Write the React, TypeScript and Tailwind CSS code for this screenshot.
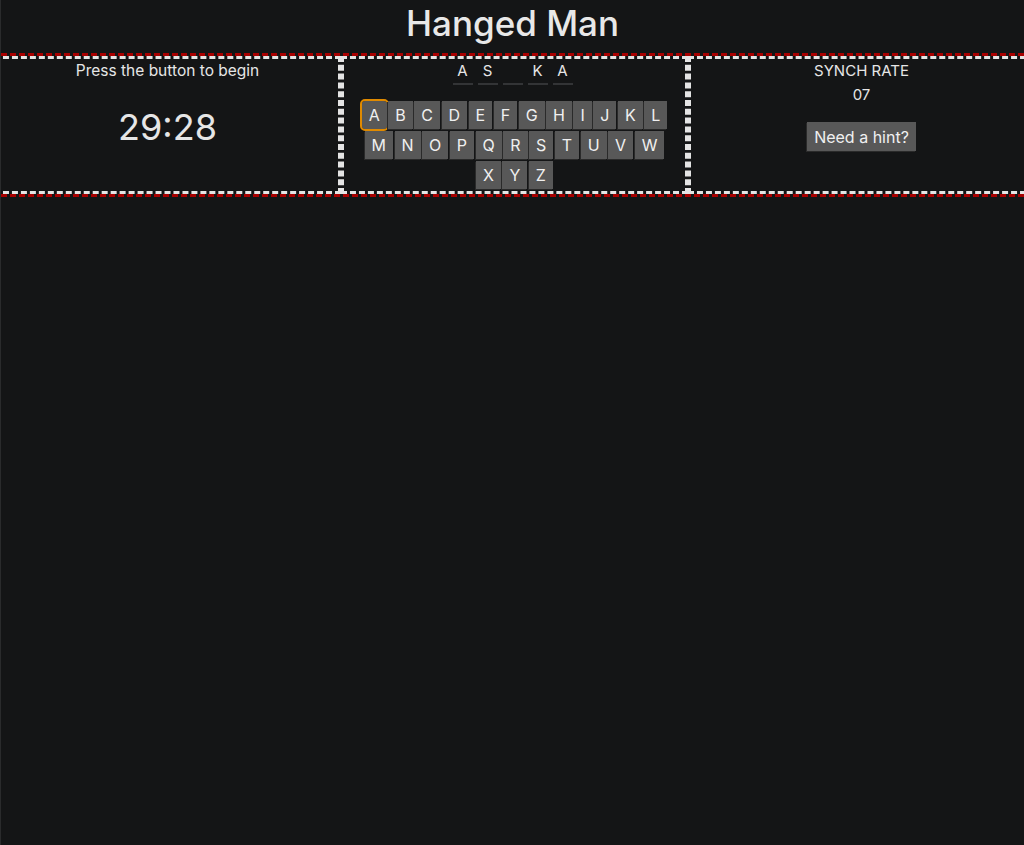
import React from "react";

const row1 = ["A", "B", "C", "D", "E", "F", "G", "H", "I", "J", "K", "L"];
const row2 = ["M", "N", "O", "P", "Q", "R", "S", "T", "U", "V", "W"];
const row3 = ["X", "Y", "Z"];
const word = ["A", "S", "", "K", "A"];

function Key({ l, focus }: { l: string; focus?: boolean }) {
  return (
    <button
      className={
        "h-[28px] px-[7px] text-[16px] leading-none text-[#f0f0f0] bg-[#585858] shadow-[-1px_1px_0_#2a2a2a] " +
        (focus ? "outline-2 outline-[#e08a00] rounded-[3px] outline-offset-0" : "")
      }
    >
      {l}
    </button>
  );
}

export default function App() {
  return (
    <div
      className="min-h-[845px] bg-[#141516] text-[#e6e6e6] overflow-hidden border-l border-[#2a2b2c]"
      style={{ fontFamily: "Inter, 'Noto Sans', sans-serif" }}
    >
      <h1 className="h-[53px] text-center text-[35px] font-medium leading-[46px] text-[#e8e8e8]">
        Hanged Man
      </h1>
      <div className="border-y-3 border-dashed border-[#a80000]">
        <div className="ml-[-7px] w-[1041px] grid grid-cols-3">
          <div className="border-3 border-dashed border-[#e4e4e4] h-[138px] flex flex-col items-center">
            <div className="mt-[2px] text-[15.5px] leading-[20px]">Press the button to begin</div>
            <div className="mt-[24px] text-[36px] leading-[44px]">29:28</div>
          </div>
          <div className="border-3 border-dashed border-[#e4e4e4] h-[138px] flex flex-col items-center">
            <div className="mt-[2px] flex gap-[5px] -translate-x-[2px]">
              {word.map((c, i) => (
                <div
                  key={i}
                  className="w-[20px] h-[24px] text-center text-[15px] leading-[20px] border-b-2 border-[#333436]"
                >
                  {c}
                </div>
              ))}
            </div>
            <div className="mt-[16px] flex flex-col items-center gap-[2px]">
              <div className="flex gap-[1.5px]">
                {row1.map((l) => (
                  <Key key={l} l={l} focus={l === "A"} />
                ))}
              </div>
              <div className="flex gap-[1.5px]">
                {row2.map((l) => (
                  <Key key={l} l={l} />
                ))}
              </div>
              <div className="flex gap-[1.5px]">
                {row3.map((l) => (
                  <Key key={l} l={l} />
                ))}
              </div>
            </div>
          </div>
          <div className="border-3 border-dashed border-[#e4e4e4] h-[138px] flex flex-col items-center">
            <div className="mt-[2px] text-[15px] leading-[20px]">SYNCH RATE</div>
            <div className="mt-[4px] text-[15px] leading-[20px]">07</div>
            <button className="mt-[17px] h-[29px] px-[7px] text-[16px] text-[#f0f0f0] bg-[#585858] shadow-[-1px_1px_0_#2a2a2a]">
              Need a hint?
            </button>
          </div>
        </div>
      </div>
    </div>
  );
}
